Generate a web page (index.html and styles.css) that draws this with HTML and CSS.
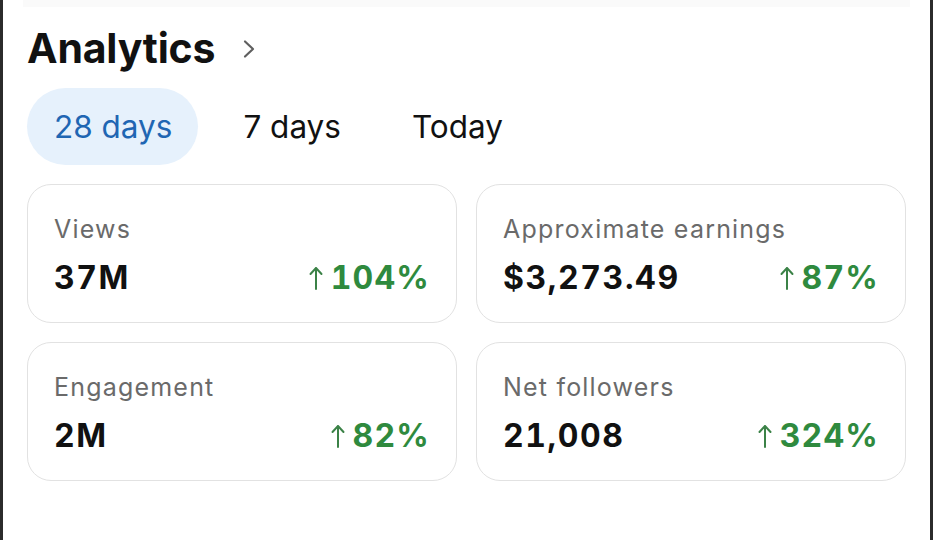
FILE: index.html
```html
<!DOCTYPE html>
<html lang="en">
<head>
<meta charset="utf-8">
<title>Analytics</title>
<link rel="stylesheet" href="styles.css">
</head>
<body>
<div class="frame">
  <div class="top-strip"></div>
  <main class="panel">
    <header class="panel-head">
      <h1 class="title">Analytics</h1>
      <svg class="chevron" width="14" height="20" viewBox="0 0 14 20" aria-hidden="true">
        <path d="M3 2.5 L11 10 L3 17.5" fill="none" stroke="#5f5f5f" stroke-width="2.2" stroke-linecap="round" stroke-linejoin="round"/>
      </svg>
    </header>

    <nav class="tabs">
      <span class="tab tab-active">28 days</span>
      <span class="tab">7 days</span>
      <span class="tab">Today</span>
    </nav>

    <section class="grid">
      <div class="card">
        <div class="label">Views</div>
        <div class="row">
          <span class="value">37M</span>
          <span class="delta"><svg class="arrow" width="14" height="24" viewBox="0 0 14 24" aria-hidden="true"><path d="M7 23 V2 M1.5 8 L7 2 L12.5 8" fill="none" stroke="currentColor" stroke-width="2" stroke-linecap="round" stroke-linejoin="round"/></svg>104%</span>
        </div>
      </div>
      <div class="card">
        <div class="label">Approximate earnings</div>
        <div class="row">
          <span class="value">$3,273.49</span>
          <span class="delta"><svg class="arrow" width="14" height="24" viewBox="0 0 14 24" aria-hidden="true"><path d="M7 23 V2 M1.5 8 L7 2 L12.5 8" fill="none" stroke="currentColor" stroke-width="2" stroke-linecap="round" stroke-linejoin="round"/></svg>87%</span>
        </div>
      </div>
      <div class="card">
        <div class="label">Engagement</div>
        <div class="row">
          <span class="value">2M</span>
          <span class="delta"><svg class="arrow" width="14" height="24" viewBox="0 0 14 24" aria-hidden="true"><path d="M7 23 V2 M1.5 8 L7 2 L12.5 8" fill="none" stroke="currentColor" stroke-width="2" stroke-linecap="round" stroke-linejoin="round"/></svg>82%</span>
        </div>
      </div>
      <div class="card">
        <div class="label">Net followers</div>
        <div class="row">
          <span class="value">21,008</span>
          <span class="delta"><svg class="arrow" width="14" height="24" viewBox="0 0 14 24" aria-hidden="true"><path d="M7 23 V2 M1.5 8 L7 2 L12.5 8" fill="none" stroke="currentColor" stroke-width="2" stroke-linecap="round" stroke-linejoin="round"/></svg>324%</span>
        </div>
      </div>
    </section>
  </main>
</div>
</body>
</html>
```

FILE: styles.css
```css
* {
  box-sizing: border-box;
}

html, body {
  margin: 0;
  padding: 0;
  background: #ffffff;
}

body {
  font-family: Inter, "Noto Sans", "Liberation Sans", sans-serif;
  color: #111111;
}

.frame {
  width: 933px;
  height: 540px;
  overflow: hidden;
  border-left: 3px solid #2b2b2b;
  border-right: 3px solid #2b2b2b;
  background: #ffffff;
}

.top-strip {
  height: 7px;
  margin: 0 20px;
  background: #fafafa;
}

.panel {
  padding: 16px 24px 0 24px;
}

.panel-head {
  display: flex;
  align-items: center;
  gap: 27px;
}

.title {
  margin: 0;
  font-size: 41px;
  line-height: 50px;
  font-weight: 700;
  letter-spacing: -0.2px;
  color: #111111;
}

.chevron {
  margin-top: 2px;
}

.tabs {
  display: flex;
  gap: 18px;
  margin-top: 15px;
}

.tab {
  display: flex;
  align-items: center;
  height: 77px;
  padding: 0 26px 0 27px;
  border-radius: 39px;
  font-size: 31.5px;
  font-weight: 400;
  color: #111111;
}

.tab-active {
  background: #e6f1fc;
  color: #1f66b3;
}

.grid {
  display: grid;
  grid-template-columns: 1fr 1fr;
  gap: 19px;
  margin-top: 19px;
}

.card {
  height: 139px;
  padding: 29px 26px 0 26px;
  border: 1.5px solid #e2e2e2;
  border-radius: 24px;
}

.label {
  font-size: 25px;
  line-height: 30px;
  letter-spacing: 1.2px;
  color: #6a6a6a;
}

.row {
  display: flex;
  align-items: baseline;
  justify-content: space-between;
  margin-top: 15px;
}

.value {
  font-size: 32px;
  line-height: 38px;
  font-weight: 700;
  font-variant-numeric: tabular-nums;
  letter-spacing: 1.6px;
  color: #111111;
}

.delta {
  display: flex;
  align-items: baseline;
  font-size: 32px;
  line-height: 38px;
  font-weight: 700;
  font-variant-numeric: tabular-nums;
  letter-spacing: 1.2px;
  color: #2f8a3e;
}

.arrow {
  align-self: center;
  margin-right: 8px;
  color: #3b8247;
}
```
